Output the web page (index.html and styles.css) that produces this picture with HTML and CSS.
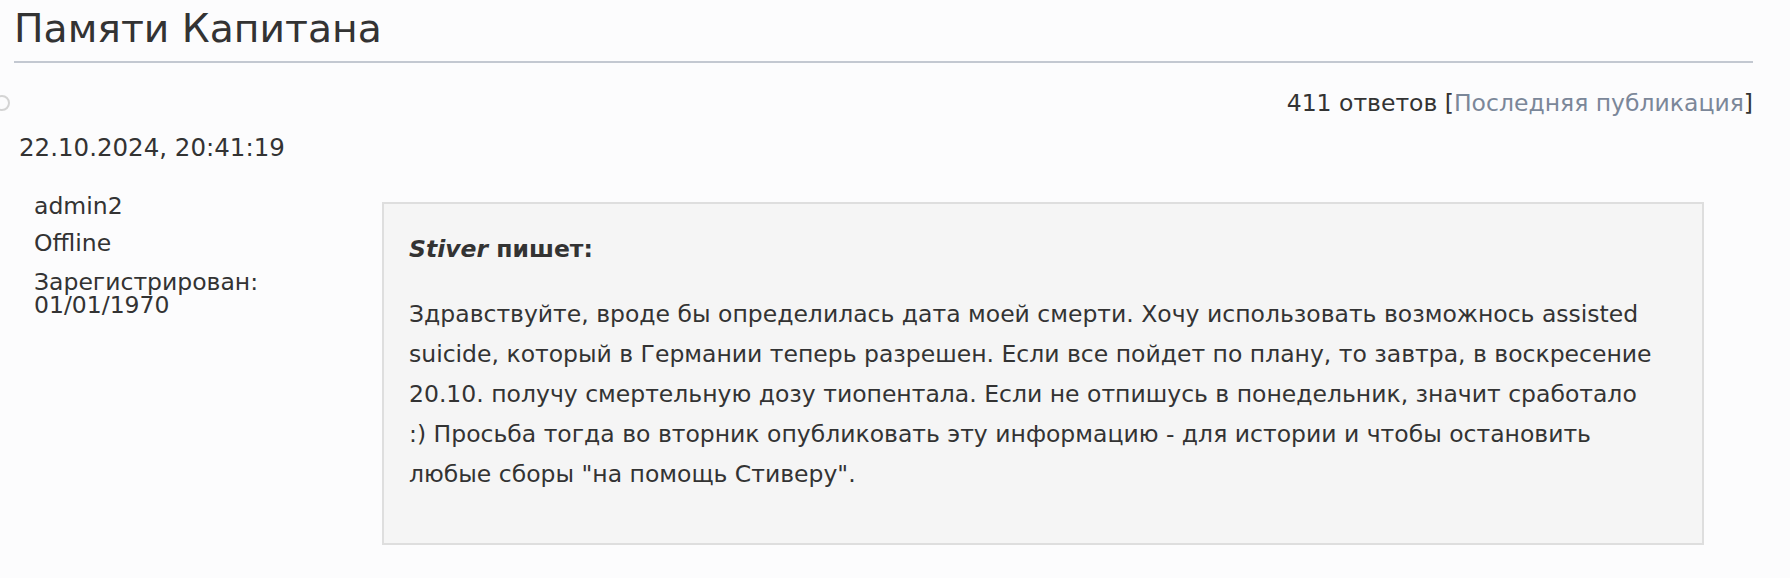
FILE: index.html
```html
<!DOCTYPE html>
<html>

<head>
    <title>Памяти Капитана</title>
    <link rel="stylesheet" href="styles.css">
</head>

<body>
    <div class="page">
        <!-- Topic title -->
        <h1 class="topic-title">Памяти Капитана</h1>

        <!-- Topic meta -->
        <div class="topic-meta">
            <span class="marker"></span>
            <span class="replies">411 ответов [<a href="#last">Последняя публикация</a>]</span>
        </div>

        <div class="post-date">22.10.2024, 20:41:19</div>

        <!-- Post -->
        <div class="post">
            <div class="post-author">
                <div class="author-name">admin2</div>
                <div class="author-status">Offline</div>
                <div class="author-reg">Зарегистрирован:<br>01/01/1970</div>
            </div>
            <div class="post-body">
                <div class="quote-head"><em>Stiver</em> пишет:</div>
                <p class="quote-text">Здравствуйте, вроде бы определилась дата моей смерти. Хочу использовать возможнось assisted suicide, который в Германии теперь разрешен. Если все пойдет по плану, то завтра, в воскресение 20.10. получу смертельную дозу тиопентала. Если не отпишусь в понедельник, значит сработало :) Просьба тогда во вторник опубликовать эту информацию - для истории и чтобы остановить любые сборы "на помощь Стиверу".</p>
            </div>
        </div>
    </div>
</body>

</html>
```

FILE: styles.css
```css
/* General page styles */
body {
    margin: 0;
    background-color: #fcfcfd;
    color: #333;
    font-family: "DejaVu Sans", Verdana, sans-serif;
    font-size: 23.5px;
}

.page {
    padding: 0 37px 0 14px;
}

/* Topic title */
.topic-title {
    margin: 0;
    padding: 4px 0 7px 0;
    font-size: 39.3px;
    font-weight: normal;
    line-height: 50px;
    border-bottom: 2px solid #c3c8d1;
}

/* Replies line */
.topic-meta {
    display: flex;
    justify-content: space-between;
    align-items: center;
    margin-top: 25px;
    line-height: 30px;
}

.marker {
    width: 12px;
    height: 12px;
    margin-left: -20px;
    border: 2px solid #d4d4d4;
    border-radius: 50%;
}

.replies a {
    color: #7b8799;
    text-decoration: none;
}

.post-date {
    margin-top: 15px;
    padding-left: 5px;
    font-size: 24.5px;
    line-height: 30px;
}

/* Post layout */
.post {
    display: flex;
    margin-top: 25px;
}

.post-author {
    width: 348px;
    padding-left: 20px;
    flex-shrink: 0;
}

.author-name,
.author-status {
    line-height: 37px;
}

.author-reg {
    margin-top: 9px;
    line-height: 23px;
}

/* Quote box */
.post-body {
    width: 1322px;
    box-sizing: border-box;
    margin-top: 14px;
    padding: 25px 46px 49px 25px;
    background-color: #f5f5f5;
    border: 2px solid #dedede;
}

.quote-head {
    font-weight: bold;
    line-height: 40px;
    margin-bottom: 25px;
}

.quote-text {
    margin: 0;
    line-height: 40px;
}
```
